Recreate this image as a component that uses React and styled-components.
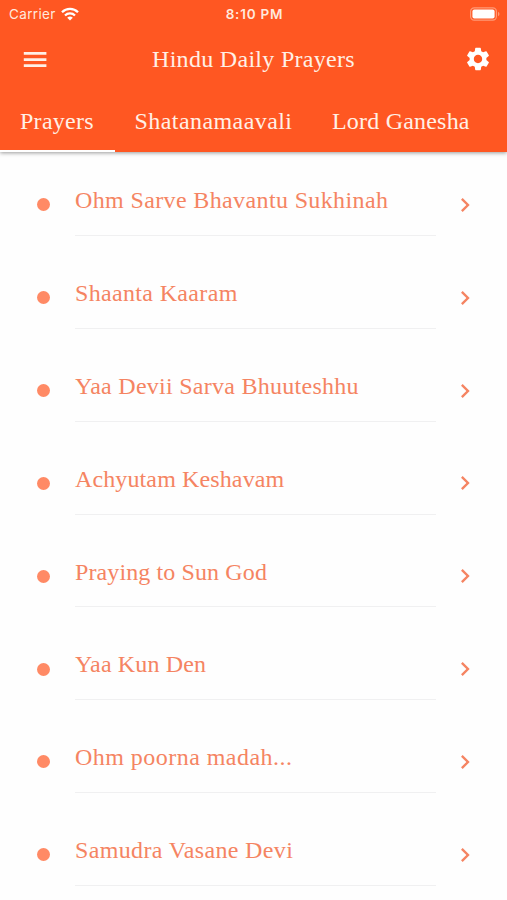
import React from "react";
import styled, { createGlobalStyle } from "styled-components";
import { MdSettings, MdChevronRight } from "react-icons/md";

const GlobalStyle = createGlobalStyle`
  * {
    box-sizing: border-box;
  }
  body {
    margin: 0;
    background: #fefefe;
    overflow: hidden;
  }
`;

const Screen = styled.div`
  width: 100%;
  height: 900px;
  overflow: hidden;
  font-family: "Liberation Serif", serif;
  font-size: 24px;
`;

const Header = styled.header`
  position: relative;
  height: 152px;
  background: #ff5722;
  color: #fff0e6;
  box-shadow: 0 1px 4px rgba(0, 0, 0, 0.4);
`;

const StatusBar = styled.div`
  display: grid;
  grid-template-columns: 1fr auto 1fr;
  align-items: center;
  height: 27px;
  padding: 0 7px 0 9px;
  font-family: Inter, sans-serif;
  font-size: 13.5px;
  color: #ffe9dd;
`;

const Carrier = styled.div`
  display: flex;
  align-items: center;
  gap: 5px;
  letter-spacing: 0.35px;
`;

const Clock = styled.div`
  font-weight: 600;
  letter-spacing: 0.8px;
`;

const Battery = styled.svg`
  justify-self: end;
`;

const Toolbar = styled.div`
  display: flex;
  align-items: center;
  height: 64px;
  padding: 0 15px 0 20px;
  svg {
    display: block;
  }
`;

const Title = styled.div`
  flex: 1;
  padding-right: 7px;
  text-align: center;
`;

const Label = styled.span`
  white-space: nowrap;
  letter-spacing: ${(props) => props.$spacing}px;
`;

const Tabs = styled.nav`
  display: flex;
  height: 61px;
`;

const Tab = styled.div`
  flex: none;
  height: 61px;
  padding: 17px 20px 0;
  line-height: 26px;
  width: ${(props) => props.$width}px;
  border-bottom: 2px solid ${(props) => (props.$active ? "#fff" : "transparent")};
`;

const List = styled.ul`
  margin: 0;
  padding: 6px 0 0;
  list-style: none;
`;

const Row = styled.li`
  display: flex;
  align-items: center;
  height: 92.85px;
  padding: 1px 28px 0 37px;
  color: #f58462;
  svg {
    display: block;
  }
`;

const Dot = styled.span`
  width: 13px;
  height: 13px;
  margin-right: 25px;
  border-radius: 50%;
  background: #ff8a65;
`;

const Name = styled.div`
  flex: 1;
  align-self: flex-start;
  height: 77px;
  margin-right: 15px;
  padding-top: 28.2px;
  line-height: 26px;
  border-bottom: 1px solid #f0f0f1;
`;

const tabs = [
  { name: "Prayers", width: 114.5, spacing: 0.27, active: true },
  { name: "Shatanamaavali", width: 197.5, spacing: 0.43 },
  { name: "Lord Ganesha", width: 180, spacing: 0.2 },
];

const prayers = [
  { name: "Ohm Sarve Bhavantu Sukhinah", spacing: 0.37 },
  { name: "Shaanta Kaaram", spacing: 0.34 },
  { name: "Yaa Devii Sarva Bhuuteshhu", spacing: 0.27 },
  { name: "Achyutam Keshavam", spacing: 0.12 },
  { name: "Praying to Sun God", spacing: 0.11 },
  { name: "Yaa Kun Den", spacing: 0.15 },
  { name: "Ohm poorna madah...", spacing: 0.46 },
  { name: "Samudra Vasane Devi", spacing: 0.35 },
];

const MenuIcon = () => (
  <svg width="30" height="30" viewBox="0 0 30 30" stroke="currentColor" strokeWidth="2.8">
    <path d="M3.8 9.4h22.6M3.8 15.6h22.6M3.8 21.7h22.6" />
  </svg>
);

const WifiIcon = () => (
  <svg width="18" height="14" viewBox="0 0 18 14" fill="none" stroke="#fff" strokeWidth="2.3">
    <path d="M1 5.2a11.3 11.3 0 0 1 16 0" />
    <path d="M4 8.5a7.1 7.1 0 0 1 10 0" />
    <path d="M9 13.6 6.2 10.8a4 4 0 0 1 5.6 0z" fill="#fff" stroke="none" />
  </svg>
);

const BatteryIcon = () => (
  <Battery width="30" height="14" viewBox="0 0 30 14">
    <rect x="0.6" y="0.8" width="25.8" height="12.4" rx="3.6" fill="none" stroke="#ff9a77" strokeWidth="1.2" />
    <rect x="2.4" y="2.6" width="22.2" height="8.8" rx="2" fill="#fff" />
    <path d="M28 4.8c2 .9 2 3.5 0 4.4z" fill="#ff9a77" />
  </Battery>
);

const App = () => {
  return (
    <Screen>
      <GlobalStyle />
      <Header>
        <StatusBar>
          <Carrier>
            Carrier
            <WifiIcon />
          </Carrier>
          <Clock>8:10 PM</Clock>
          <BatteryIcon />
        </StatusBar>
        <Toolbar>
          <MenuIcon />
          <Title>
            <Label $spacing={0.3}>Hindu Daily Prayers</Label>
          </Title>
          <MdSettings size={28} color="#fff" />
        </Toolbar>
        <Tabs>
          {tabs.map((tab) => (
            <Tab key={tab.name} $width={tab.width} $active={tab.active}>
              <Label $spacing={tab.spacing}>{tab.name}</Label>
            </Tab>
          ))}
        </Tabs>
      </Header>
      <List>
        {prayers.map((prayer) => (
          <Row key={prayer.name}>
            <Dot />
            <Name>
              <Label $spacing={prayer.spacing}>{prayer.name}</Label>
            </Name>
            <MdChevronRight size={28} />
          </Row>
        ))}
      </List>
    </Screen>
  );
};

export default App;
